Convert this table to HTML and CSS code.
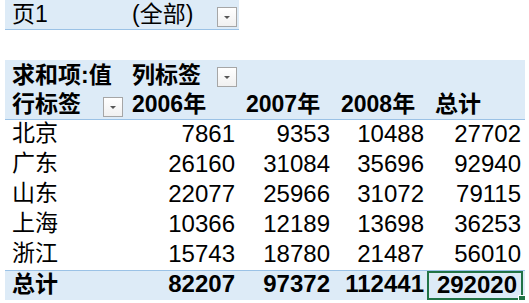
FILE: index.html
```html
<!DOCTYPE html>
<html lang="zh">
<head>
<meta charset="utf-8">
<link rel="stylesheet" href="styles.css">
</head>
<body>
<div class="sheet">
  <div class="row page">
    <div class="cell txt">页1</div>
    <div class="cell txt filter">(全部)<span class="dd"><span class="tri"></span></span></div>
  </div>
  <div class="row blank"></div>
  <div class="row head">
    <div class="cell txt">求和项:值</div>
    <div class="cell txt filter">列标签<span class="dd"><span class="tri"></span></span></div>
    <div class="cell"></div><div class="cell"></div><div class="cell"></div>
  </div>
  <div class="row head head2">
    <div class="cell txt filter">行标签<span class="dd"><span class="tri"></span></span></div>
    <div class="cell txt">2006年</div>
    <div class="cell txt">2007年</div>
    <div class="cell txt">2008年</div>
    <div class="cell txt">总计</div>
  </div>
  <div class="row data">
    <div class="cell txt">北京</div><div class="cell num">7861</div><div class="cell num">9353</div><div class="cell num">10488</div><div class="cell num">27702</div>
  </div>
  <div class="row data">
    <div class="cell txt">广东</div><div class="cell num">26160</div><div class="cell num">31084</div><div class="cell num">35696</div><div class="cell num">92940</div>
  </div>
  <div class="row data">
    <div class="cell txt">山东</div><div class="cell num">22077</div><div class="cell num">25966</div><div class="cell num">31072</div><div class="cell num">79115</div>
  </div>
  <div class="row data">
    <div class="cell txt">上海</div><div class="cell num">10366</div><div class="cell num">12189</div><div class="cell num">13698</div><div class="cell num">36253</div>
  </div>
  <div class="row data">
    <div class="cell txt">浙江</div><div class="cell num">15743</div><div class="cell num">18780</div><div class="cell num">21487</div><div class="cell num">56010</div>
  </div>
  <div class="row total">
    <div class="cell txt">总计</div><div class="cell num">82207</div><div class="cell num">97372</div><div class="cell num">112441</div><div class="cell num sel">292020<span class="handle"></span></div>
  </div>
</div>
</body>
</html>
```
FILE: styles.css
```css
html, body {
  margin: 0;
  padding: 0;
  background: #ffffff;
}
.sheet {
  padding-left: 5px;
  font-family: "Liberation Sans Narrow", "Liberation Sans", "Noto Sans CJK SC", sans-serif;
  font-size: 24px;
  color: #000;
}
.row {
  display: grid;
  grid-template-columns: 120px 114px 95px 94px 97px;
  height: 30px;
  box-sizing: border-box;
  width: 520px;
}
.cell {
  position: relative;
  display: flex;
  align-items: center;
  white-space: nowrap;
  box-sizing: border-box;
  line-height: 1;
  padding-bottom: 3px;
}
.txt {
  font-family: "Liberation Sans", "Noto Sans CJK SC", sans-serif;
  font-size: 23px;
  padding-left: 7px;
}
.num {
  justify-content: flex-end;
  padding-right: 4px;
}
.page {
  grid-template-columns: 120px 114px;
  width: 234px;
  background: #ddebf7;
  border-bottom: 1px solid #9bc2e6;
}
.page .cell {
  padding-bottom: 1px;
}
.filter {
  justify-content: space-between;
  padding-right: 2px;
}
.filter .dd {
  align-self: flex-start;
  margin-top: 7px;
}
.dd {
  width: 18px;
  height: 18px;
  border: 1px solid #a6a6a6;
  background: linear-gradient(#ffffff, #f0f0f0);
  display: flex;
  align-items: center;
  justify-content: center;
}
.tri {
  width: 0;
  height: 0;
  border-left: 3px solid transparent;
  border-right: 3px solid transparent;
  border-top: 3px solid #555;
}
.head {
  background: #ddebf7;
  font-weight: bold;
}
.head .cell {
  padding-bottom: 0;
}
.head .txt { font-weight: bold; }
.head2 {
  border-bottom: 1px solid #9bc2e6;
}
.total {
  background: #ddebf7;
  border-top: 1px solid #9bc2e6;
  font-weight: bold;
}
.total .txt { font-weight: bold; }
.sel {
  border: 2px solid #217346;
  margin-left: -1px;
  margin-right: 2px;
  padding-bottom: 1px;
}
.handle {
  position: absolute;
  right: -5px;
  bottom: -5px;
  width: 6px;
  height: 6px;
  background: #217346;
  border: 1px solid #fff;
}
```
